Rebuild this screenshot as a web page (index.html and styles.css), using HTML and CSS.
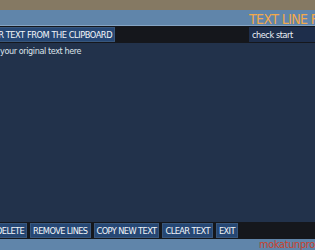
FILE: index.html
```html
<!DOCTYPE html>
<html lang="en">
<head>
  <meta charset="UTF-8">
  <title>Text Line Remover</title>
  <link rel="stylesheet" href="styles.css">
</head>
<body>
  <div class="topband"></div>
  <header class="header">
    <h1 class="title">TEXT LINE REMOVER</h1>
  </header>
  <div class="toolbar">
    <button class="btn paste">PASTE YOUR TEXT FROM THE CLIPBOARD</button>
    <input class="check" type="text" value="check start">
  </div>
  <div class="editor">
    <div class="placeholder">Paste your original text here</div>
  </div>
  <div class="toolbar actions">
    <button class="btn first">DELETE</button>
    <button class="btn">REMOVE LINES</button>
    <button class="btn">COPY NEW TEXT</button>
    <button class="btn">CLEAR TEXT</button>
    <button class="btn">EXIT</button>
  </div>
  <footer class="footer">
    <span class="credit">mokatunprod</span>
  </footer>
</body>
</html>
```
FILE: styles.css
```css
html, body {
  margin: 0;
  padding: 0;
  height: 100%;
  overflow: hidden;
}
body {
  font-family: "DejaVu Sans Condensed", "DejaVu Sans", sans-serif;
  background-color: #22324b;
  display: flex;
  flex-direction: column;
}
.topband {
  height: 10px;
  background-color: #857963;
  flex: none;
}
.header {
  height: 15px;
  background-color: #6085aa;
  border-bottom: 1px solid #86a5c4;
  flex: none;
  display: flex;
  white-space: nowrap;
}
.title {
  margin: -1px 0 0 249px;
  font-size: 14px;
  font-weight: normal;
  letter-spacing: -0.6px;
  line-height: 20px;
  color: #f3a94b;
}
.toolbar {
  height: 17px;
  background-color: #15171c;
  flex: none;
  display: flex;
  align-items: center;
  white-space: nowrap;
}
.btn {
  font-family: inherit;
  font-size: 9.2px;
  letter-spacing: -0.6px;
  color: #f2f5f9;
  background-color: #264774;
  border: 1px solid #39577c;
  padding: 0 2px;
  height: 15px;
  line-height: 13px;
  margin: 0;
}
.paste {
  margin-left: -46px;
  letter-spacing: -0.45px;
}
.check {
  margin-left: auto;
  margin-right: -40px;
  width: 106px;
  height: 15px;
  box-sizing: border-box;
  border: none;
  background-color: #1e2e4b;
  color: #eef2f7;
  font-family: inherit;
  font-size: 9px;
  letter-spacing: -0.4px;
  padding: 0 3px;
}
.editor {
  flex: 1;
  background-color: #22324b;
  padding: 3px 0 0 0;
}
.placeholder {
  margin-left: -22px;
  font-size: 9px;
  letter-spacing: -0.4px;
  color: #dde3ea;
  white-space: nowrap;
}
.actions {
  gap: 3px;
}
.first {
  margin-left: -7px;
}
.footer {
  height: 11px;
  background-color: #6085aa;
  flex: none;
  display: flex;
  white-space: nowrap;
}
.credit {
  margin-left: 259px;
  font-size: 11px;
  letter-spacing: -0.4px;
  line-height: 12px;
  color: #c9432b;
}
```
